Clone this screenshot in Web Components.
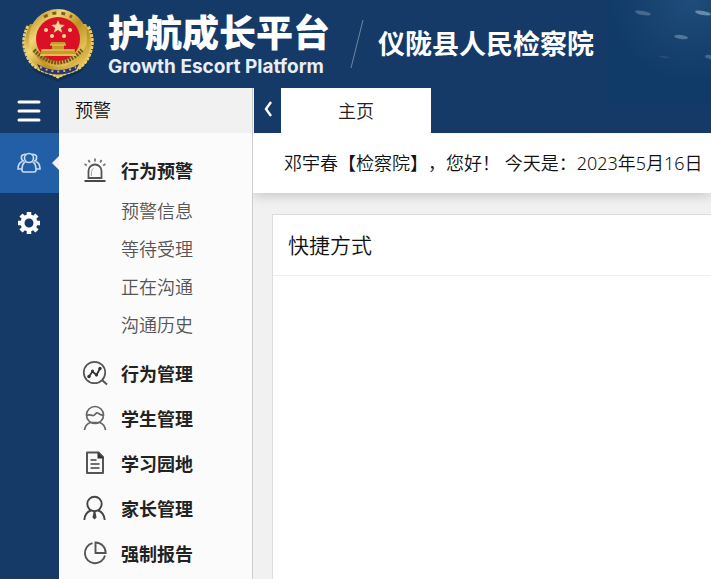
<!DOCTYPE html>
<html lang="zh-CN">
<head>
<meta charset="utf-8">
<meta name="viewport" content="width=device-width, initial-scale=1">
<title>护航成长平台</title>
<style>
  html, body { margin: 0; height: 100%; }
  body {
    font-family: "Noto Sans", "Noto Sans CJK SC", sans-serif;
    font-size: 18px;
    color: #111;
    background: #153a67;
    overflow: hidden;
    text-spacing-trim: space-all;
  }
</style>
</head>
<body>
<app-shell>
  <app-header slot="header" titulo="护航成长平台" subtitulo="Growth Escort Platform">仪陇县人民检察院</app-header>
  <side-rail slot="rail"></side-rail>
  <menu-panel slot="menu" titulo="预警">
    <menu-group icono="alarma" titulo="行为预警">
      <menu-item>预警信息</menu-item>
      <menu-item>等待受理</menu-item>
      <menu-item>正在沟通</menu-item>
      <menu-item>沟通历史</menu-item>
    </menu-group>
    <menu-group icono="grafica" titulo="行为管理"></menu-group>
    <menu-group icono="alumno" titulo="学生管理"></menu-group>
    <menu-group icono="documento" titulo="学习园地"></menu-group>
    <menu-group icono="padre" titulo="家长管理"></menu-group>
    <menu-group icono="reporte" titulo="强制报告"></menu-group>
  </menu-panel>
  <tab-bar>主页</tab-bar>
  <welcome-bar>邓宇春【检察院】，您好！ 今天是：2023年5月16日</welcome-bar>
  <content-card titulo="快捷方式"></content-card>
</app-shell>

<script>
const iconos = {
  alarma: `<g fill="none" stroke="#555" stroke-width="1.8"><path d="M5.5 20V13a6.5 6.5 0 0 1 13 0v7z"/><path d="M8.5 18v-4.500a3.500 3.500 0 0 1 2-3" stroke="#aaa" stroke-width="1"/><path d="M1.500 23h21" stroke="#333"/><path d="M12 .5v3M5.500 2l1.300 2.500M18.500 2l-1.300 2.500M1.500 6l2.400 1.500M22.500 6l-2.400 1.500" stroke="#777"/></g>`,
  grafica: `<g fill="none" stroke="#555" stroke-width="1.7"><circle cx="11.500" cy="11.500" r="10.700"/><path d="M19 19l5 4.500" stroke-width="2"/><path d="M6 15.500l3.500-5 4 3.500 3.500-6.500" stroke="#333" stroke-width="1.800"/></g><g fill="#333"><circle cx="6" cy="15.500" r="1.700"/><circle cx="9.500" cy="10" r="1.500"/><circle cx="13.500" cy="14" r="1.500"/><circle cx="17" cy="7.500" r="1.700"/></g>`,
  alumno: `<g fill="none" stroke="#666" stroke-width="1.700"><circle cx="12" cy="9" r="8.500"/><path d="M3.500 9.500c3-2 5 .5 7 0s2-3 4-2.500 3 2.500 6 2"/><path d="M1.500 24c.5-4 3-6.500 6-7.500h9c3 1 5.500 3.500 6 7.500"/></g>`,
  documento: `<g fill="none" stroke="#555" stroke-width="2"><path d="M4 1.500h11.500l4.500 4.500v16H4z" stroke-linejoin="round"/><path d="M7.500 9h6M7.500 13h9M7.500 17h9" stroke="#444" stroke-width="1.600"/></g><path d="M14.500 1v6.500H21z" fill="#333"/>`,
  padre: `<g fill="none" stroke="#444" stroke-width="1.900"><circle cx="11.500" cy="8" r="7.200"/><path d="M1.300 24c.3-5 2.500-8 6.500-9.500M21.700 24c-.3-5-2.500-8-6.500-9.500"/></g><path d="M10.500 16h2l1 5.500-2 2-2-2z" fill="#444"/>`,
  reporte: `<g fill="none" stroke="#555" stroke-width="1.900"><path d="M9.500 2.200A10.200 10.200 0 1 0 22 14.500"/><path d="M12.500 1.500v10.500h10.200A10.300 10.300 0 0 0 12.500 1.500z"/></g>`
};

class AppShell extends HTMLElement {
  constructor() {
    super();
    this.shadow = this.attachShadow({ mode: 'open' });
  }

  connectedCallback() {
    this.shadow.innerHTML = `
      <style>
        :host { display: flex; flex-direction: column; min-height: 100vh; position: relative; z-index: 0; }
        .fondo { position: absolute; top: 0; right: 0; z-index: -1; }
        .cuerpo { flex: 1; display: flex; }
        main { flex: 1; min-width: 0; display: flex; flex-direction: column; }
      </style>
      <svg class="fondo" width="103" height="103" viewBox="0 0 103 103" aria-hidden="true">
        <defs>
          <radialGradient id="luz" cx="80%" cy="0%" r="80%">
            <stop offset="0" stop-color="#1f4c7a"/>
            <stop offset="1" stop-color="#103a68"/>
          </radialGradient>
        </defs>
        <rect width="103" height="103" fill="url(#luz)"/>
        <g fill="#8ca6bf">
          <ellipse cx="35" cy="13" rx="8" ry="2" transform="rotate(10 35 13)" opacity=".4"/>
          <ellipse cx="95" cy="13" rx="8" ry="2" transform="rotate(10 95 13)" opacity=".7"/>
          <ellipse cx="73" cy="37" rx="7" ry="2" transform="rotate(8 73 37)" opacity=".5"/>
          <ellipse cx="56" cy="57" rx="5" ry="1" transform="rotate(8 56 57)" opacity=".15"/>
          <ellipse cx="102" cy="57" rx="5" ry="2" transform="rotate(8 102 57)" opacity=".4"/>
        </g>
      </svg>
      <slot name="header"></slot>
      <div class="cuerpo">
        <slot name="rail"></slot>
        <slot name="menu"></slot>
        <main><slot></slot></main>
      </div>
    `;
  }
}

class AppHeader extends HTMLElement {
  constructor() {
    super();
    this.shadow = this.attachShadow({ mode: 'open' });
  }

  connectedCallback() {
    this.shadow.innerHTML = `
      <style>
        :host { display: flex; align-items: center; height: 88px; padding-left: 20px; color: #fff; white-space: nowrap; }
        .escudo { flex: none; margin-right: 12px; }
        .marca { display: flex; flex-direction: column; }
        h1 { margin: 0; font: 900 37px/45px "Liberation Sans", "Noto Sans CJK SC", sans-serif; }
        p { margin: 0; font: bold 19px/20px Inter, sans-serif; color: #e8eef5; }
        .barra { flex: none; margin: 0 14px 0 20px; }
        h2 { margin: 0; font-size: 27px; line-height: 40px; font-weight: 700; }
      </style>
      <svg class="escudo" width="76" height="76" viewBox="0 0 76 76" aria-hidden="true">
        <defs>
          <linearGradient id="oro" x1="0" y1="0" x2="1" y2="1">
            <stop offset="0" stop-color="#a97c16"/><stop offset=".3" stop-color="#f1d775"/>
            <stop offset=".55" stop-color="#bd9023"/><stop offset=".8" stop-color="#e3c256"/><stop offset="1" stop-color="#8b6412"/>
          </linearGradient>
        </defs>
        <path d="M8 20Q1 36 7 52q5 13 19 17 7 2 12 5 5-3 12-5 14-4 19-17 6-16-1-32z" fill="#092448" opacity=".5" transform="translate(0 2)"/>
        <path d="M10 18Q0 34 7 51q5 12 19 16 7 2 12 5 5-3 12-5 14-4 19-16 7-17-3-33z" fill="url(#oro)"/>
        <path d="M8 20Q0 35 7 50q5 12 19 16 7 2 12 5 5-3 12-5 14-4 19-16 7-15-1-30" fill="none" stroke="#e9cd6c" stroke-width="3" stroke-dasharray="3 1"/>
        <path d="M17 58q21 12 42 0l-3 6q-18 9-36 0z" fill="#273577"/>
        <path d="M20 61q18 9 36 0" fill="none" stroke="#d9b752" stroke-width="2" stroke-dasharray="2 4"/>
        <circle cx="38" cy="32" r="29" fill="url(#oro)"/>
        <path d="M14 44q24 25 48 0" fill="none" stroke="#6f571b" stroke-width="4" stroke-dasharray="2 1"/>
        <path d="M24 11q14-8 28 0" fill="none" stroke="#7b601b" stroke-width="3" stroke-dasharray="4 5"/>
        <circle cx="38" cy="33" r="22" fill="#db1027"/>
        <g fill="#f5dc92">
          <path d="M38 14l1.800 4.600 5 .3-3.900 3.100 1.300 4.800-4.200-2.700-4.200 2.700 1.300-4.800-3.900-3.100 5-.3z"/>
          <circle cx="26" cy="24" r="2"/><circle cx="50" cy="24" r="2"/><circle cx="32" cy="30" r="2"/><circle cx="44" cy="30" r="2"/>
        </g>
        <path d="M31 36h14l1 3h-2v4h11v5H21v-5h11v-4h-2z" fill="#c79a2c"/>
        <path d="M30 39h16M22 44h32" stroke="#f0d068"/>
        <path d="M20 49h36" stroke="#e7bd4c" stroke-width="2"/>
      </svg>
      <div class="marca">
        <h1>${this.getAttribute('titulo')}</h1>
        <p>${this.getAttribute('subtitulo')}</p>
      </div>
      <svg class="barra" width="14" height="50" viewBox="0 0 14 50" aria-hidden="true"><path d="M13 1L1 49" stroke="#6d87a3"/></svg>
      <h2><slot></slot></h2>
    `;
  }
}

class SideRail extends HTMLElement {
  constructor() {
    super();
    this.shadow = this.attachShadow({ mode: 'open' });
  }

  connectedCallback() {
    this.shadow.innerHTML = `
      <style>
        :host { display: flex; flex-direction: column; flex: none; width: 59px; }
        button { display: flex; align-items: center; justify-content: center; height: 60px; padding: 0 2px 0 0; border: 0; background: none; cursor: pointer; }
        .menu { height: 45px; }
        .activo { position: relative; background: #235fa7; }
        .activo::after { content: ""; position: absolute; right: 0; top: 23px; border: 7px solid transparent; border-left: 0; border-right-color: #f4f4f4; }
      </style>
      <button class="menu" aria-label="展开菜单">
        <svg width="24" height="24" viewBox="0 0 24 24"><path d="M2 3h20M2 12h20M2 21h20" stroke="#fff" stroke-width="3" stroke-linecap="round"/></svg>
      </button>
      <button class="activo" aria-label="预警">
        <svg width="24" height="22" viewBox="0 0 24 22" fill="none" stroke="#c9dcf2" stroke-width="1.600">
          <path d="M7 9C4 9 3 3 7 2.500c1-.3 2 0 2.500.5M17 9c3 0 4-6 0-6.500-1-.3-2 0-2.500.5"/>
          <path d="M5.500 9.500C2 10.500 1 13 1 17h4M18.500 9.500C22 10.500 23 13 23 17h-4"/>
          <circle cx="12" cy="6" r="4.500"/>
          <path d="M8.500 9.800C5.500 11 5 14 5 18q0 2 2 2h10q2 0 2-2c0-4-.5-7-3.500-8.200"/>
        </svg>
      </button>
      <button aria-label="设置">
        <svg width="22" height="22" viewBox="0 0 22 22" fill="none" stroke="#fff">
          <circle cx="11" cy="11" r="6.500" stroke-width="4"/>
          <path d="M11 0v4M11 18v4M0 11h4M18 11h4M3 3l3 3M16 16l3 3M3 19l3-3M16 6l3-3" stroke-width="4.500"/>
        </svg>
      </button>
    `;
  }
}

class MenuPanel extends HTMLElement {
  constructor() {
    super();
    this.shadow = this.attachShadow({ mode: 'open' });
  }

  connectedCallback() {
    this.shadow.innerHTML = `
      <style>
        :host { display: block; flex: none; width: 193px; background: #fbfbfb; border-right: 1px solid #ccc; }
        h3 { margin: 0; padding-left: 16px; font-size: 18px; line-height: 45px; font-weight: 350; background: #f1f1f1; }
        nav { padding-top: 14px; }
      </style>
      <h3>${this.getAttribute('titulo')}</h3>
      <nav><slot></slot></nav>
    `;
  }
}

class MenuGroup extends HTMLElement {
  constructor() {
    super();
    this.shadow = this.attachShadow({ mode: 'open' });
  }

  connectedCallback() {
    this.shadow.innerHTML = `
      <style>
        :host { display: block; }
        a { display: flex; align-items: center; gap: 14px; height: 45px; padding-left: 24px; color: #222; font-weight: 700; text-decoration: none; }
        svg { flex: none; overflow: visible; }
        .hijos { padding-bottom: 6px; }
        .hijos[hidden] { display: none; }
      </style>
      <a href="#">
        <svg width="24" height="24" viewBox="0 0 24 24" aria-hidden="true">${iconos[this.getAttribute('icono')]}</svg>
        ${this.getAttribute('titulo')}
      </a>
      <div class="hijos" ${this.children.length ? '' : 'hidden'}><slot></slot></div>
    `;
  }
}

class MenuItem extends HTMLElement {
  constructor() {
    super();
    this.shadow = this.attachShadow({ mode: 'open' });
  }

  connectedCallback() {
    this.shadow.innerHTML = `
      <style>
        :host { display: block; }
        a { display: block; padding-left: 62px; line-height: 38px; font-weight: 350; color: #555; text-decoration: none; }
      </style>
      <a href="#"><slot></slot></a>
    `;
  }
}

class TabBar extends HTMLElement {
  constructor() {
    super();
    this.shadow = this.attachShadow({ mode: 'open' });
  }

  connectedCallback() {
    this.shadow.innerHTML = `
      <style>
        :host { display: flex; flex: none; height: 45px; border-left: 1px solid #f1f1f1; }
        button { border: 0; padding: 0 0 2px; font: inherit; cursor: pointer; }
        .previo { width: 27px; background: none; }
        .tab { width: 150px; background: #fff; color: #222; font-weight: 350; }
      </style>
      <button class="previo" aria-label="上一个">
        <svg width="8" height="16" viewBox="0 0 8 16"><path d="M7 1L2 8l5 7" fill="none" stroke="#fff" stroke-width="2.400"/></svg>
      </button>
      <button class="tab"><slot></slot></button>
    `;
  }
}

class WelcomeBar extends HTMLElement {
  constructor() {
    super();
    this.shadow = this.attachShadow({ mode: 'open' });
  }

  connectedCallback() {
    // the clip keeps the shadow below the bar only
    this.shadow.innerHTML = `
      <style>
        :host { display: block; flex: none; position: relative; padding-left: 31px; line-height: 60px; font-weight: 350; white-space: nowrap; background: #fff; box-shadow: 0 2px 12px rgba(0, 0, 0, .2); clip-path: inset(0 0 -16px 0); }
      </style>
      <slot></slot>
    `;
  }
}

class ContentCard extends HTMLElement {
  constructor() {
    super();
    this.shadow = this.attachShadow({ mode: 'open' });
  }

  connectedCallback() {
    this.shadow.innerHTML = `
      <style>
        :host { display: flex; flex: 1; padding: 21px 0 0 19px; background: #f1f1f1; }
        section { flex: 1; background: #fff; border: 1px solid #ddd; border-width: 1px 0 0 1px; }
        h3 { margin: 0; padding-left: 15px; font-size: 21px; line-height: 60px; font-weight: 350; border-bottom: 1px solid #eee; }
      </style>
      <section>
        <h3>${this.getAttribute('titulo')}</h3>
        <slot></slot>
      </section>
    `;
  }
}

customElements.define('app-shell', AppShell);
customElements.define('app-header', AppHeader);
customElements.define('side-rail', SideRail);
customElements.define('menu-panel', MenuPanel);
customElements.define('menu-group', MenuGroup);
customElements.define('menu-item', MenuItem);
customElements.define('tab-bar', TabBar);
customElements.define('welcome-bar', WelcomeBar);
customElements.define('content-card', ContentCard);
</script>
</body>
</html>
